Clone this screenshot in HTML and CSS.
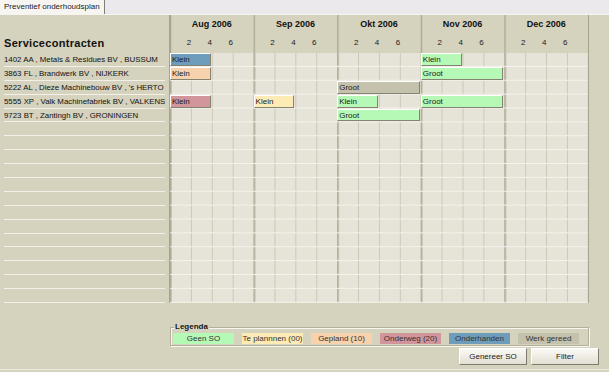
FILE: index.html
```html
<html>
  <head>
    <link rel="stylesheet" href="styles.css">
    <title>Preventief onderhoudsplan</title>
  </head>
  <body>
    <div class="window">
      <div class="tabbar">
        <div class="tab">Preventief onderhoudsplan</div>
      </div>

      <section class="planner">
        <div class="contracts">
          <div class="contracts-head">Servicecontracten</div>
          <ul class="contract-list">
            <li>1402 AA , Metals &amp; Residues BV , BUSSUM</li>
            <li>3863 FL , Brandwerk BV , NIJKERK</li>
            <li>5222 AL , Dieze Machinebouw BV , 's HERTO</li>
            <li>5555 XP , Valk Machinefabriek BV , VALKENS</li>
            <li>9723 BT , Zantingh BV , GRONINGEN</li>
            <li></li><li></li><li></li><li></li><li></li><li></li><li></li>
            <li></li><li></li><li></li><li></li><li></li><li></li>
          </ul>
        </div>

        <div class="chart">
          <div class="months">
            <div class="month">
              <div class="month-name">Aug 2006</div>
              <div class="days"><span>2</span><span>4</span><span>6</span></div>
            </div>
            <div class="month">
              <div class="month-name">Sep 2006</div>
              <div class="days"><span>2</span><span>4</span><span>6</span></div>
            </div>
            <div class="month">
              <div class="month-name">Okt 2006</div>
              <div class="days"><span>2</span><span>4</span><span>6</span></div>
            </div>
            <div class="month">
              <div class="month-name">Nov 2006</div>
              <div class="days"><span>2</span><span>4</span><span>6</span></div>
            </div>
            <div class="month">
              <div class="month-name">Dec 2006</div>
              <div class="days"><span>2</span><span>4</span><span>6</span></div>
            </div>
          </div>

          <div class="grid">
            <div class="bar onderhanden" style="grid-area: 1 / 1 / 2 / 3">Klein</div>
            <div class="bar geen" style="grid-area: 1 / 13 / 2 / 15">Klein</div>
            <div class="bar gepland" style="grid-area: 2 / 1 / 3 / 3">Klein</div>
            <div class="bar geen" style="grid-area: 2 / 13 / 3 / 17">Groot</div>
            <div class="bar gereed" style="grid-area: 3 / 9 / 4 / 13">Groot</div>
            <div class="bar onderweg" style="grid-area: 4 / 1 / 5 / 3">Klein</div>
            <div class="bar plannen" style="grid-area: 4 / 5 / 5 / 7">Klein</div>
            <div class="bar geen" style="grid-area: 4 / 9 / 5 / 11">Klein</div>
            <div class="bar geen" style="grid-area: 4 / 13 / 5 / 17">Groot</div>
            <div class="bar geen" style="grid-area: 5 / 9 / 6 / 13">Groot</div>
          </div>
        </div>
      </section>

      <section class="footer">
        <fieldset class="legend">
          <legend>Legenda</legend>
          <div class="key geen">Geen SO</div>
          <div class="key plannen">Te plannnen (00)</div>
          <div class="key gepland">Gepland (10)</div>
          <div class="key onderweg">Onderweg (20)</div>
          <div class="key onderhanden">Onderhanden</div>
          <div class="key gereed">Werk gereed</div>
        </fieldset>
        <div class="buttons">
          <button class="button">Genereer SO</button>
          <button class="button">Filter</button>
        </div>
      </section>
    </div>
  </body>
</html>
```

FILE: styles.css
```css
* {
  box-sizing: border-box;
}
body {
  margin: 0;
  background-color: #d5d2bd;
  color: #111;
  font-family: "Liberation Sans", Arial, sans-serif;
  font-size: 8px;
}
.window {
  width: 609px;
  height: 370px;
  border-bottom: 1px solid #eeece4;
  overflow: hidden;
}

/* tab strip */
.tabbar {
  display: flex;
  height: 15px;
  background-color: #ebe9ec;
  border-bottom: 1px solid #f6f5f0;
}
.tab {
  padding: 0 4px;
  line-height: 14px;
  background-color: #f6f5f1;
  border-right: 1px solid #807e76;
  color: #222;
}

/* planner */
.planner {
  display: flex;
}
.contracts {
  width: 169px;
  padding: 0 4px;
}
.contracts-head {
  display: flex;
  align-items: flex-end;
  height: 38px;
  padding-bottom: 4px;
  font-size: 11px;
  font-weight: bold;
  letter-spacing: 0.3px;
}
.contract-list {
  display: grid;
  grid-template-rows: repeat(18, 1fr);
  height: 250px;
  margin: 0;
  padding: 0;
  list-style: none;
  font-size: 7.85px;
}
.contract-list li {
  border-bottom: 1px solid #f2f0e8;
  line-height: 13px;
  white-space: nowrap;
  overflow: hidden;
}

.chart {
  width: 420px;
  border-left: 1px solid #a6a38f;
  border-right: 1px solid #a6a38f;
}
.months {
  display: flex;
  height: 38px;
  background-image: linear-gradient(to right, #a9a692 0 1px, #c9c6b3 1px 2px, transparent 2px);
  background-size: 83.6px 100%;
}
.month {
  display: flex;
  flex: 0 0 83.6px;
  flex-direction: column;
}
.month-name {
  height: 18px;
  line-height: 18px;
  text-align: center;
  font-size: 9px;
  font-weight: bold;
}
.days {
  display: flex;
  height: 20px;
  padding-left: 8.5px;
  line-height: 20px;
  color: #222;
}
.days span {
  width: 20.9px;
  text-align: center;
}

.grid {
  display: grid;
  grid-template-columns: repeat(20, 1fr);
  grid-template-rows: repeat(18, 1fr);
  height: 250px;
  background-color: #e6e3d8;
  background-image:
    linear-gradient(to bottom, transparent calc(100% - 1px), #f4f2eb calc(100% - 1px)),
    linear-gradient(to right, #aeab97 0 1px, #c6c3b1 1px 2px, transparent 2px),
    linear-gradient(to right, #cbc8b8 0 1px, transparent 1px);
  background-size: 100% 13.889px, 83.6px 100%, 20.9px 100%;
}
.bar {
  margin: 0 1px 1px 0;
  padding-left: 1px;
  border: 1px solid;
  border-color: #fff #858372 #858372 #fff;
  line-height: 11px;
  color: #1a1a1a;
  white-space: nowrap;
  overflow: hidden;
}

/* status colours */
.geen { background-color: #b6f8b6; }
.plannen { background-color: #fdebb5; }
.gepland { background-color: #f7d2ac; }
.onderweg { background-color: #d2959c; }
.onderhanden { background-color: #6e9cbb; }
.gereed { background-color: #c4c1ad; }

/* footer */
.legend {
  display: flex;
  gap: 8px;
  min-width: 0;
  margin: 19px 20px 0 170px;
  padding: 1px 2px 1px 2px;
  border: 1px solid #b3b09c;
  box-shadow: inset 1px 1px #f7f6f0, 1px 1px #f7f6f0;
}
.legend legend {
  margin-left: 1px;
  padding: 0 1px;
  line-height: 10px;
  font-weight: bold;
}
.key {
  width: 61px;
  height: 11px;
  line-height: 11px;
  text-align: center;
  color: #333;
  white-space: nowrap;
}
.buttons {
  display: flex;
  justify-content: flex-end;
  gap: 4px;
  margin-top: 2px;
  padding-right: 10px;
}
.button {
  width: 68px;
  height: 17px;
  padding: 0;
  border: 1px solid;
  border-color: #fff #7d7b6f #7d7b6f #fff;
  background: linear-gradient(#faf9f5, #e2dfd1);
  color: #222;
  font-family: "Liberation Sans", Arial, sans-serif;
  font-size: 8px;
}
```
